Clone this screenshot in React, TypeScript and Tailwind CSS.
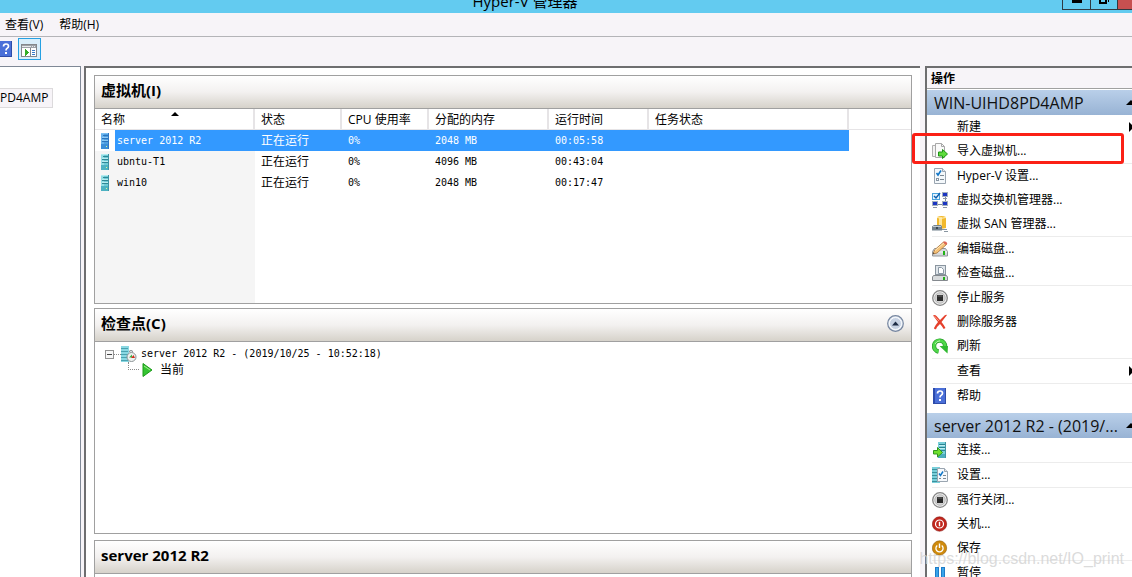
import type { ReactNode } from "react";

type Vm = { name: string; state: string; cpu: string; memory: string; uptime: string; selected?: boolean };

const vms: Vm[] = [
  { name: "server 2012 R2", state: "正在运行", cpu: "0%", memory: "2048 MB", uptime: "00:05:58", selected: true },
  { name: "ubntu-T1", state: "正在运行", cpu: "0%", memory: "4096 MB", uptime: "00:43:04" },
  { name: "win10", state: "正在运行", cpu: "0%", memory: "2048 MB", uptime: "00:17:47" },
];

const MONO = "font-['DejaVu_Sans_Mono','Noto_Sans_CJK_SC',monospace] text-[10px]";

/* ---------- icons ---------- */

function ServerIcon({ selected }: { selected?: boolean }) {
  return (
    <svg width="8" height="16" viewBox="0 0 8 16" shapeRendering="crispEdges">
      <rect width="8" height="16" fill={selected ? "#4f9fe0" : "#6fcbd6"} />
      <rect width="3" height="16" fill={selected ? "#68b2ec" : "#93dde4"} />
      <rect width="8" height="1" fill={selected ? "#7cc0f2" : "#b6ecf0"} />
      <path d="M2 2.5h5M1 5.5h6M1 8.5h6" stroke={selected ? "#2b74bd" : "#2f8896"} />
      <path d="M1 4.5h6M1 7.5h6" stroke={selected ? "#8ecaf5" : "#b9ecf0"} />
      <rect y="11" width="8" height="5" fill={selected ? "#3c8ed8" : "#4db2c2"} />
      <rect x="5" y="13" width="1" height="1" fill="#d9ff8a" />
      <rect x="7" width="1" height="16" fill={selected ? "#2f78c4" : "#3c94a4"} />
    </svg>
  );
}

function Icon({ children }: { children?: ReactNode }) {
  return (
    <svg width="16" height="16" viewBox="0 0 16 16" className="shrink-0" aria-hidden="true">
      {children}
    </svg>
  );
}

const importIcon = (
  <Icon>
    <path d="M.5 2.5h5l2 2v9h-7z" fill="#f3f3f3" stroke="#b0b0b0" />
    <path d="M3.5.5h6l3 3v11h-9z" fill="#fafafa" stroke="#a8a8a8" />
    <path d="M9.5.5v3h3" fill="none" stroke="#a8a8a8" />
    <path d="M6.5 9h4V6.500l5 4.500-5 4.500V13h-4z" fill="#5fdc3c" stroke="#1f9417" />
  </Icon>
);

const settingsIcon = (
  <Icon>
    <path d="M2.5.5h8l3 3v12h-11z" fill="#f4f8fb" stroke="#9aa5b0" />
    <path d="M10.5.5v3h3" fill="#dfe6ec" stroke="#9aa5b0" />
    <path d="M4.5 5l1.500 2 3-4.500" fill="none" stroke="#1377c8" strokeWidth="1.6" />
    <path d="M8 7.5h4M8 11.5h4" stroke="#7d8993" />
    <rect x="4.5" y="10.5" width="2" height="2" fill="#fff" stroke="#8895a2" />
  </Icon>
);

const switchIcon = (
  <Icon>
    <rect x=".5" y="1.5" width="7" height="6" fill="#e6f4fd" stroke="#4aa3dd" />
    <path d="M2 4l2 2 4-5" fill="none" stroke="#0e5fae" strokeWidth="1.5" />
    <path d="M13.5 5v6M3 12.5h10" stroke="#7d8796" />
    <rect x="10.5" y=".5" width="5" height="4" fill="#1b35c2" stroke="#a3aebc" />
    <rect x=".5" y="9.5" width="5" height="4" fill="#1b35c2" stroke="#a3aebc" />
    <rect x="10.5" y="9.5" width="5" height="4" fill="#1b35c2" stroke="#a3aebc" />
    <path d="M1 15.5h4M11 15.5h4M11 6.5h4" stroke="#8c96a5" />
  </Icon>
);

const sanIcon = (
  <Icon>
    <path d="M5 1q4.500-2 9 0v11q-4.500 1.500-9 0z" fill="#f2b92c" />
    <path d="M7 1.500v10q1.500.5 3 .5V1z" fill="#ffe69a" />
    <path d="M5 1.500q4.500 1.500 9 0" fill="none" stroke="#fff0bb" />
    <path d="M0 10.500l2-1.500h7l1 1.500v4H0z" fill="#75838f" />
    <path d="M1 10.5h8" stroke="#c2ccd4" />
    <path d="M10 13.5h5M12 15.5h4" stroke="#8996a1" />
    <rect x="4" y="11" width="2" height="2" fill="#3b4750" />
  </Icon>
);

const editDiskIcon = (
  <Icon>
    <path d="M2.5 7.5h11l2 3v4.500H.5v-4.500z" fill="#d5d8db" stroke="#8f9499" />
    <path d="M1 11h14" stroke="#f8f8f8" />
    <rect x="11" y="10" width="2" height="4" fill="#23b317" />
    <path d="M1 13l1.500-4 9-8 3 2.500-9.500 8.500z" fill="#f6c277" stroke="#a5713a" strokeWidth=".8" />
    <path d="M3 9.500l9-7.500" stroke="#ffe9bd" />
    <path d="M11 1.500L12.500.3q2.500.2 2.800 2.500L14 4z" fill="#dd6654" />
    <path d="M1 13l.5-1.500 1 1z" fill="#333" />
  </Icon>
);

const inspectDiskIcon = (
  <Icon>
    <rect x="3.5" y=".5" width="10" height="9" fill="#dfe5ea" stroke="#8a959f" />
    <path d="M6.5 2.500h3l2 2v4h-5z" fill="#fff" stroke="#8b98a4" />
    <path d="M1.500 10.500h13l1 1.500v3.500H.5V12z" fill="#d8dbdd" stroke="#84898e" />
    <rect x="11" y="12" width="2" height="3" fill="#21b016" />
  </Icon>
);

const stopIcon = (
  <Icon>
    <circle cx="8" cy="8" r="7.3" fill="#f2f2f2" stroke="#858585" strokeWidth="1.300" />
    <circle cx="8" cy="8" r="5.300" fill="#d2d2d2" stroke="#b0b0b0" strokeWidth=".8" />
    <rect x="5" y="5" width="6" height="6" fill="#2a2a2a" />
    <path d="M5.500 6h5" stroke="#666" />
  </Icon>
);

const deleteIcon = (
  <Icon>
    <path d="M1 1.500q2-1 3.500.5l3.500 4 4.500-4.500q1.500-1 2.500-.5L9.500 8q2.500 3 4 6l-1.800 1q-1.700-3-3.700-5-3 2.500-4 5.200-2 .3-2-1.200 1.500-3 4-6z" fill="#e5402c" />
    <path d="M2.500 2.200l4.500 4.800" stroke="#ff9a84" />
  </Icon>
);

const refreshIcon = (
  <Icon>
    <path d="M6.500 13.500a5.500 5.500 0 1 1 6.500-5" fill="none" stroke="#2a9d2c" strokeWidth="4.400" />
    <path d="M6.500 13.500a5.500 5.500 0 1 1 6.500-5" fill="none" stroke="#4fd84a" strokeWidth="3" />
    <path d="M7.500 8H16l-.5 7.500z" fill="#2fb930" />
    <path d="M3 6q1.500-3 5-3.200" fill="none" stroke="#b5f4a8" />
  </Icon>
);

const connectIcon = (
  <Icon>
    <rect x="6" width="8" height="16" fill="#79cfda" />
    <path d="M7 2.5h6M7 5.5h6M7 8.5h6" stroke="#2b8390" />
    <path d="M7 3.5h6M7 6.5h6" stroke="#c0eff3" />
    <rect x="13" width="1" height="16" fill="#3f95a4" />
    <rect x="6" y="12" width="7" height="4" fill="#4bacbc" />
    <path d="M1.500 8.500h4v-3l5 5-5 4.500v-3h-4z" fill="#6fe02d" stroke="#2f981f" />
  </Icon>
);

const vmSettingsIcon = (
  <Icon>
    <rect width="8" height="16" fill="#79cfda" />
    <path d="M0 2.500h7M0 5.500h7M0 8.500h7M0 11.500h7M0 14.500h7" stroke="#3a919e" />
    <path d="M5.500 1.500h7l3 3v10h-10z" fill="#f6f9fc" stroke="#9aa5b0" />
    <path d="M12.500 1.500v3h3" fill="#dde4ea" stroke="#9aa5b0" />
    <path d="M7 6.500l1.500 2 2.500-4" fill="none" stroke="#1377c8" strokeWidth="1.500" />
    <path d="M11 8.500h3M11 11.500h3M7 11.500h2" stroke="#7d8993" />
  </Icon>
);

const shutdownIcon = (
  <Icon>
    <circle cx="7.500" cy="8" r="7.200" fill="#c1261c" stroke="#8a1610" strokeWidth=".6" />
    <circle cx="7.500" cy="8" r="4" fill="none" stroke="#fff" strokeWidth="1.200" />
    <path d="M7.500 5.800v4.400" stroke="#fff" strokeWidth="1.400" />
  </Icon>
);

const saveIcon = (
  <Icon>
    <circle cx="7.500" cy="8" r="7.200" fill="#cf8a0c" stroke="#925a05" strokeWidth=".6" />
    <path d="M5.300 5.500a3.600 3.600 0 1 0 4.400 0" fill="none" stroke="#fff" strokeWidth="1.300" />
    <path d="M7.500 3.500V8" stroke="#fff" strokeWidth="1.400" />
  </Icon>
);

const pauseIcon = (
  <Icon>
    <rect x="3.500" y="2.500" width="3" height="14" fill="#3aa4ea" stroke="#1f7cc8" />
    <rect x="9.500" y="2.500" width="3" height="14" fill="#3aa4ea" stroke="#1f7cc8" />
  </Icon>
);

const helpIcon = (
  <Icon>
    <rect x="1" width="13" height="16" fill="#4a6fd8" />
    <rect x="1" width="2" height="16" fill="#2c4bad" />
    <path d="M1 15.500h13M13.500 0v16" stroke="#2f4ca8" />
    <path d="M5.500 5.500Q5.500 3 8 3t2.500 2.200q0 1.300-1.300 2.100Q8 8 8 9.500" fill="none" stroke="#fff" strokeWidth="1.700" />
    <rect x="7" y="11" width="2" height="2" fill="#fff" />
  </Icon>
);

/* ---------- right-hand actions ---------- */

type Action = { label: string; icon?: ReactNode; submenu?: boolean; marked?: boolean };

const serverActions: Action[][] = [
  [{ label: "新建", submenu: true }, { label: "导入虚拟机...", icon: importIcon, marked: true }],
  [
    { label: "Hyper-V 设置...", icon: settingsIcon },
    { label: "虚拟交换机管理器...", icon: switchIcon },
    { label: "虚拟 SAN 管理器...", icon: sanIcon },
  ],
  [
    { label: "编辑磁盘...", icon: editDiskIcon },
    { label: "检查磁盘...", icon: inspectDiskIcon },
  ],
  [
    { label: "停止服务", icon: stopIcon },
    { label: "删除服务器", icon: deleteIcon },
    { label: "刷新", icon: refreshIcon },
  ],
  [{ label: "查看", submenu: true }],
  [{ label: "帮助", icon: helpIcon }],
];

const vmActions: Action[][] = [
  [{ label: "连接...", icon: connectIcon }],
  [{ label: "设置...", icon: vmSettingsIcon }],
  [
    { label: "强行关闭...", icon: stopIcon },
    { label: "关机...", icon: shutdownIcon },
    { label: "保存", icon: saveIcon },
  ],
  [{ label: "暂停", icon: pauseIcon }],
];

function ActionGroups({ groups }: { groups: Action[][] }) {
  return (
    <div className="flex flex-col">
      {groups.map((group, i) => (
        <ul key={i}>
          {i > 0 && <li className="ml-[5px] h-px bg-[#ececec]" />}
          {group.map((a) => (
            <li key={a.label} className="relative">
              <button className="flex h-6 w-full items-center gap-[9px] pl-[5px] text-left text-xs whitespace-nowrap">
                {a.icon ?? <Icon />}
                <span className="flex-1">{a.label}</span>
                {a.submenu && (
                  <svg width="3" height="10" viewBox="0 0 3 10">
                    <path d="M0 0l5 5-5 5z" />
                  </svg>
                )}
              </button>
              {a.marked && (
                <span className="pointer-events-none absolute -top-1.5 right-2 -bottom-px -left-[15px] rounded-[3px] border-3 border-[#fb2016]" />
              )}
            </li>
          ))}
        </ul>
      ))}
    </div>
  );
}

function ActionHeading({ children }: { children: ReactNode }) {
  return (
    <button className="flex h-[25px] w-full shrink-0 items-center bg-linear-to-b from-[#b9cfe9] to-[#98b3d4] pl-[7px] text-left text-base text-[#111] whitespace-nowrap">
      <span className="flex-1">{children}</span>
      <svg width="6" height="5" viewBox="0 0 6 5">
        <path d="M0 5l5-5 5 5z" />
      </svg>
    </button>
  );
}

/* ---------- centre ---------- */

function Group({ title, action, className, children }: { title: string; action?: ReactNode; className: string; children?: ReactNode }) {
  return (
    <section className={`flex shrink-0 flex-col border border-[#a0a0a0] bg-white ${className}`}>
      <header className="flex h-[33px] shrink-0 items-center justify-between border-b border-[#a0a0a0] bg-linear-to-b from-white via-[#f3f1f0] to-[#d6d2ca] pr-[7px] pb-1 pl-1.5">
        <h2 className="text-[15px] font-bold">{title}</h2>
        {action}
      </header>
      {children}
    </section>
  );
}

function VmTable() {
  const th = "border-r-2 border-b border-[#e6e4e6] p-0 pt-0.5 pl-1.5 text-left text-xs leading-4 font-normal";
  return (
    <table className="h-[194px] w-full table-fixed border-separate border-spacing-0 leading-4 whitespace-nowrap">
      <colgroup>
        <col className="w-40" />
        <col className="w-[87px]" />
        <col className="w-[87px]" />
        <col className="w-[120px]" />
        <col className="w-[100px]" />
        <col className="w-[200px]" />
        <col />
      </colgroup>
      <thead>
        <tr className="h-[21px]">
          <th className={`${th} relative`}>
            名称
            <svg width="8" height="4" viewBox="0 0 8 4" className="absolute top-[3px] left-19">
              <path d="M0 4l4-4 4 4z" />
            </svg>
          </th>
          <th className={th}>状态</th>
          <th className={th}>CPU 使用率</th>
          <th className={th}>分配的内存</th>
          <th className={th}>运行时间</th>
          <th className={th}>任务状态</th>
          <th className="border-b border-[#e6e4e6] p-0" />
        </tr>
      </thead>
      <tbody>
        {vms.map((vm) => {
          const cell = vm.selected ? "bg-[#3399ff] p-0 pl-1.5 text-white" : "p-0 pl-1.5";
          return (
            <tr key={vm.name} className="h-[21px]">
              <td className="bg-[#f5f5f5] p-0">
                <div className="flex items-center">
                  <span className={`flex h-[21px] w-5 shrink-0 items-center pl-1.5 ${vm.selected ? "bg-white" : ""}`}>
                    <ServerIcon selected={vm.selected} />
                  </span>
                  <span className={`flex h-[21px] flex-1 items-center pl-0.5 ${MONO} ${vm.selected ? "bg-[#3399ff] text-white" : ""}`}>
                    {vm.name}
                  </span>
                </div>
              </td>
              <td className={`${cell} text-xs leading-4`}>{vm.state}</td>
              <td className={`${cell} ${MONO}`}>{vm.cpu}</td>
              <td className={`${cell} ${MONO}`}>{vm.memory}</td>
              <td className={`${cell} ${MONO}`}>{vm.uptime}</td>
              <td className={cell} />
              <td />
            </tr>
          );
        })}
        <tr>
          <td className="bg-[#f5f5f5]" />
          <td colSpan={6} />
        </tr>
      </tbody>
    </table>
  );
}

function CheckpointTree() {
  return (
    <ul className="pt-1 pl-2.5">
      <li>
        <div className="flex h-4 items-center">
          <button aria-label="折叠" className="flex size-[9px] items-center justify-center border border-[#919191] bg-[#f6f6f6]">
            <span className="h-px w-[5px] bg-[#444]" />
          </button>
          <span className="w-[7px] border-t border-dotted border-[#8a8a8a]" />
          <Icon>
            <rect width="8" height="16" fill="#8ad8e2" />
            <path d="M0 2.500h7M0 5.500h7M0 8.500h7M0 11.500h7M0 14.500h7" stroke="#4aa3b1" />
            <circle cx="10.500" cy="11" r="4.500" fill="#eef2f2" stroke="#8b9294" />
            <path d="M8 5.500l2-1 2 1" fill="none" stroke="#70787b" />
            <path d="M8 11.500h3v-3z" fill="#3bb344" />
            <path d="M10 12l2.500-3 1.500 3z" fill="#d0301d" />
          </Icon>
          <span className={`pl-1 ${MONO}`}>server 2012 R2 - (2019/10/25 - 10:52:18)</span>
        </div>
        <ul>
          <li className="flex h-4 items-center gap-[3px] pl-[23px]">
            <span className="mb-2 h-2 w-[11px] border-b border-l border-dotted border-[#8a8a8a]" />
            <svg width="11" height="14" viewBox="0 0 11 14">
              <path d="M1 .5L10 7l-9 6.500z" fill="#35c431" stroke="#1c9a1b" />
              <path d="M2 3l6 4" stroke="#a6ee94" />
            </svg>
            <span className="pl-1 text-xs">当前</span>
          </li>
        </ul>
      </li>
    </ul>
  );
}

const collapseButton = (
  <button aria-label="折叠检查点">
    <svg width="17" height="17" viewBox="0 0 17 17">
      <circle cx="8.500" cy="8.500" r="7.800" fill="#e8edf4" stroke="#7686a0" strokeWidth="1.200" />
      <circle cx="8.500" cy="8.500" r="6" fill="#c7d2e3" stroke="#fafcff" />
      <path d="M5 10.500l3.500-4 3.500 4z" fill="#1d2b45" />
    </svg>
  </button>
);

export default function App() {
  return (
    <div className="relative flex h-screen flex-col overflow-hidden bg-[#f7f4f8] font-['Open_Sans','Noto_Sans_CJK_SC',sans-serif] text-xs text-black">
      <header className="flex h-[13px] shrink-0 items-start overflow-hidden bg-[#63cbf0]">
        <div className="flex h-[13px] flex-1 items-end justify-center pr-3">
          <h1 className="text-[15px] leading-6">Hyper-V 管理器</h1>
        </div>
        <button aria-label="最小化" className="flex h-2.5 w-[29px] justify-center border-x border-b border-[#2f3a42]">
          <span className="h-[3px] w-2.5 bg-black" />
        </button>
        <button aria-label="还原" className="flex h-2.5 w-[26px] justify-center border-b border-[#2f3a42]">
          <svg width="10" height="4" viewBox="0 0 10 4" shapeRendering="crispEdges">
            <path d="M1 0v3h6V0M9.500 0v2" fill="none" stroke="#000" strokeWidth="2" />
          </svg>
        </button>
        <button aria-label="关闭" className="h-2.5 w-[15px] border-b border-l border-[#2f3a42] bg-[#c75050]" />
      </header>

      <nav className="flex h-6 shrink-0 items-center gap-4 border-b border-[#b4b4b8] pl-[5px]">
        <button>查看(V)</button>
        <button>帮助(H)</button>
      </nav>

      <div className="flex h-[29px] shrink-0 items-start gap-1.5 pt-px">
        <button aria-label="帮助" className="flex h-[22px] w-3 items-center justify-end overflow-hidden">
          <svg width="14" height="16" viewBox="0 0 14 16" className="shrink-0">
            <rect width="14" height="16" fill="#4a6fd8" />
            <path d="M0 15.500h14M13.500 0v16" stroke="#2f4ca8" />
            <path d="M5.500 5.500Q5.500 3 8 3t2.500 2.200q0 1.300-1.300 2.100Q8 8 8 9.500" fill="none" stroke="#fff" strokeWidth="1.700" />
            <rect x="7" y="11" width="2" height="2" fill="#fff" />
          </svg>
        </button>
        <button aria-label="显示/隐藏操作窗格" className="flex h-[22px] w-[23px] items-center justify-center border border-[#26a0e2] bg-[#d9eefa]">
          <svg width="17" height="14" viewBox="0 0 17 14" shapeRendering="crispEdges" className="mt-1 shrink-0">
            <rect x=".5" y=".5" width="15" height="12" fill="#fff" stroke="#84878b" />
            <rect x="1" y="1" width="14" height="3" fill="#9da2a8" />
            <path d="M1 2.500h9M11 2.500h1M13 2.500h1" stroke="#e8eaec" />
            <path d="M9.500 4v8" stroke="#84878b" />
            <path d="M4 5l4 3.500L4 12z" fill="#32ad26" />
            <path d="M11 6.500h3M11 8.500h3M11 10.500h3" stroke="#3a7bc8" />
          </svg>
        </button>
      </div>

      <div className="flex min-h-0 flex-1">
        <aside className="w-[81px] shrink-0 border-t border-r border-[#7f8896] bg-white pt-[21px]">
          <button className="h-5 w-[53px] overflow-hidden border border-l-0 border-[#dcdadc] bg-[#f7f4f8] text-left">PD4AMP</button>
        </aside>

        <main className="ml-[3px] flex min-w-0 flex-1 flex-col border-t-2 border-l-2 border-[#6e6e70] bg-white px-2 pt-[7px]">
          <Group title="虚拟机(I)" className="h-[229px]">
            <VmTable />
          </Group>
          <Group title="检查点(C)" action={collapseButton} className="mt-1 h-[226px]">
            <CheckpointTree />
          </Group>
          <Group title="server 2012 R2" className="mt-1.5 h-[226px]" />
        </main>

        <aside className="relative ml-[5px] flex w-[207px] shrink-0 flex-col border-t-2 border-l-2 border-[#6e6e70] bg-white">
          <h2 className="mb-px flex h-[21px] shrink-0 items-center border-b border-[#a0a0a0] bg-[#f7f4f8] pt-0.5 pl-1 text-xs font-bold">操作</h2>
          <ActionHeading>WIN-UIHD8PD4AMP</ActionHeading>
          <ActionGroups groups={serverActions} />
          <div className="mt-[5px]">
            <ActionHeading>server 2012 R2 - (2019/...</ActionHeading>
          </div>
          <ActionGroups groups={vmActions} />
        </aside>
      </div>

      <p className="pointer-events-none absolute right-2 bottom-1.5 font-['Liberation_Sans',sans-serif] text-base text-[#d2d2d2]/80">
        https://blog.csdn.net/IO_print
      </p>
    </div>
  );
}
